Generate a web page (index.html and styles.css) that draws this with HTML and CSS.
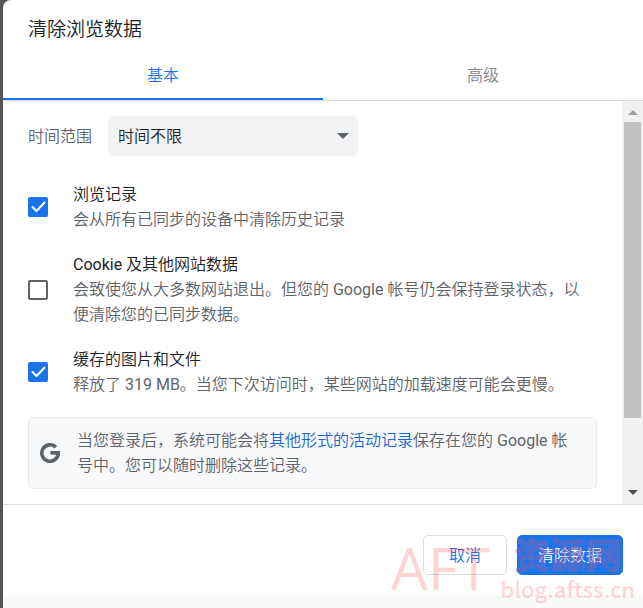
FILE: index.html
```html
<!DOCTYPE html>
<html lang="zh-CN">
	<head>
		<meta charset="UTF-8">
		<title>清除浏览数据</title>
		<link rel="stylesheet" href="styles.css">
	</head>
	<body>
		<div class="dialog">
			<h1 class="dialog-title">清除浏览数据</h1>

			<div class="tabs" role="tablist">
				<button type="button" class="tab tab-on" role="tab" aria-selected="true">基本</button>
				<button type="button" class="tab" role="tab" aria-selected="false">高级</button>
			</div>

			<div class="main">
				<div class="content">
					<div class="range">
						<label for="range">时间范围</label>
						<div class="sel-range">
							<select id="range">
								<option>时间不限</option>
							</select>
							<svg class="sel-arrow" width="12" height="6" viewBox="0 0 12 6"><path d="M0 0h12L6 6z" fill="#5f6368"/></svg>
						</div>
					</div>

					<div class="item">
						<input type="checkbox" id="history" checked>
						<label for="history">
							<span class="item-name">浏览记录</span>
							<span class="item-text">会从所有已同步的设备中清除历史记录</span>
						</label>
					</div>
					<div class="item">
						<input type="checkbox" id="cookie">
						<label for="cookie">
							<span class="item-name">Cookie 及其他网站数据</span>
							<span class="item-text">会致使您从大多数网站退出。但您的 Google 帐号仍会保持登录状态，以便清除您的已同步数据。</span>
						</label>
					</div>
					<div class="item">
						<input type="checkbox" id="cache" checked>
						<label for="cache">
							<span class="item-name">缓存的图片和文件</span>
							<span class="item-text">释放了 319 MB。当您下次访问时，某些网站的加载速度可能会更慢。</span>
						</label>
					</div>

					<div class="notice">
						<svg class="google" width="20" height="20" viewBox="0 0 20 20"><path d="M15.900 4.300A8.200 8.200 0 1 0 18.200 9.900H10.400" fill="none" stroke="#5f6368" stroke-width="3.600"/></svg>
						<p>当您登录后，系统可能会将<a href="#">其他形式的活动记录</a>保存在您的 Google 帐号中。您可以随时删除这些记录。</p>
					</div>
				</div>

				<div class="scrollbar" aria-hidden="true">
					<svg width="10" height="5" viewBox="0 0 10 5"><path d="M0 5h10L5 0z" fill="#a0a0a0"/></svg>
					<div class="track"><div class="thumb"></div></div>
					<svg width="10" height="5" viewBox="0 0 10 5"><path d="M0 0h10L5 5z" fill="#505050"/></svg>
				</div>
			</div>

			<div class="footer">
				<button type="button" class="btn">取消</button>
				<button type="button" class="btn btn-main">清除数据</button>
			</div>

			<div class="watermark">
				<span class="mark-aft">AFT</span>
				<div class="mark-right">
					<span class="mark-name">资源网</span>
					<span class="mark-url">blog.aftss.cn</span>
				</div>
			</div>
		</div>
	</body>
</html>
```

FILE: styles.css
```css
* { box-sizing: border-box;}
html, body { height: 100%;}
body { margin: 0; padding-left: 3px; background: #555; font-family: Roboto, "Noto Sans CJK SC DemiLight", "Noto Sans CJK SC", sans-serif; font-size: 16px; line-height: 25px; color: #202124;}
button, select { font: inherit; color: inherit;}

.dialog { position: relative; display: flex; flex-direction: column; min-height: 100vh; background: #fff; border-top-left-radius: 8px; border-bottom: 13px solid #fafafa;}
.dialog-title { margin: 0; padding: 17px 25px 10px; font-size: 19px; font-weight: normal; line-height: 25px;}

.tabs { display: flex; height: 49px; border-bottom: 1px solid #dadce0;}
.tab { flex: 1; padding: 0; border: 0; border-bottom: 2px solid transparent; background: none; color: #80868b;}
.tab-on { border-color: #1a73e8; color: #1a73e8;}

.main { flex: 1; display: flex;}
.content { flex: 1; padding: 15px 25px;}

.range { display: flex; align-items: center; gap: 16px; margin-bottom: 26px; color: #5f6368;}
.sel-range { position: relative; width: 250px;}
.sel-range select { display: block; width: 100%; height: 40px; padding: 0 10px; border: 0; border-radius: 5px; background: #f1f3f4; color: #202124; appearance: none;}
.sel-arrow { position: absolute; right: 9px; top: 17px; pointer-events: none;}

.item { display: flex; align-items: center; gap: 25px; margin-bottom: 20px; padding-right: 5px;}
.item label { flex: 1;}
.item span { display: block;}
.item-text { color: #5f6368;}
.item input { flex: none; width: 20px; height: 20px; margin: 0; border: 2px solid #5f6368; border-radius: 2px; appearance: none;}
.item input:checked { border-color: #1a73e8; background: #1a73e8 url("data:image/svg+xml,%3Csvg xmlns='http://www.w3.org/2000/svg' viewBox='0 0 16 16'%3E%3Cpath d='M2 7.500l4.500 4.500 8.500-9' fill='none' stroke='white' stroke-width='2'/%3E%3C/svg%3E");}

.notice { display: flex; align-items: center; gap: 17px; padding: 10px 20px 10px 11px; border: 1px solid #e8eaed; border-radius: 5px; background: #f8f9fa; color: #5f6368;}
.notice svg { flex: none;}
.notice p { margin: 0;}
.notice a { color: #1967d2; text-decoration: none;}

.scrollbar { display: flex; flex-direction: column; align-items: center; width: 21px; padding: 9px 0; background: #f1f1f1;}
.track { flex: 1; align-self: stretch; padding: 7px 2px;}
.thumb { height: 82%; background: #c1c1c1;}

.footer { display: flex; justify-content: flex-end; gap: 10px; padding: 30px 20px 20px; border-top: 1px solid #dadce0;}
.btn { height: 40px; padding: 0 25px; border: 1px solid #dadce0; border-radius: 5px; background: #fff; color: #1a73e8;}
.btn-main { padding: 0 20px; border-color: #1a73e8; background: #1a73e8; color: #fff;}

.watermark { position: absolute; right: 8px; bottom: -8px; display: flex; align-items: center; gap: 11px; color: rgba(255, 60, 60, .22); pointer-events: none;}
.mark-aft { font-family: "Open Sans", sans-serif; font-size: 58px; line-height: 60px;}
.mark-right { display: flex; flex-direction: column; align-items: center; font-weight: bold;}
.mark-name { font-family: "Noto Sans CJK SC", sans-serif; font-size: 36px; line-height: 40px; color: rgba(80, 60, 160, .4); text-shadow: 0 0 2px rgba(255, 200, 200, .3);}
.mark-url { font-family: "Noto Sans CJK SC", sans-serif; font-size: 22px; line-height: 30px; font-weight: 500;}
```
